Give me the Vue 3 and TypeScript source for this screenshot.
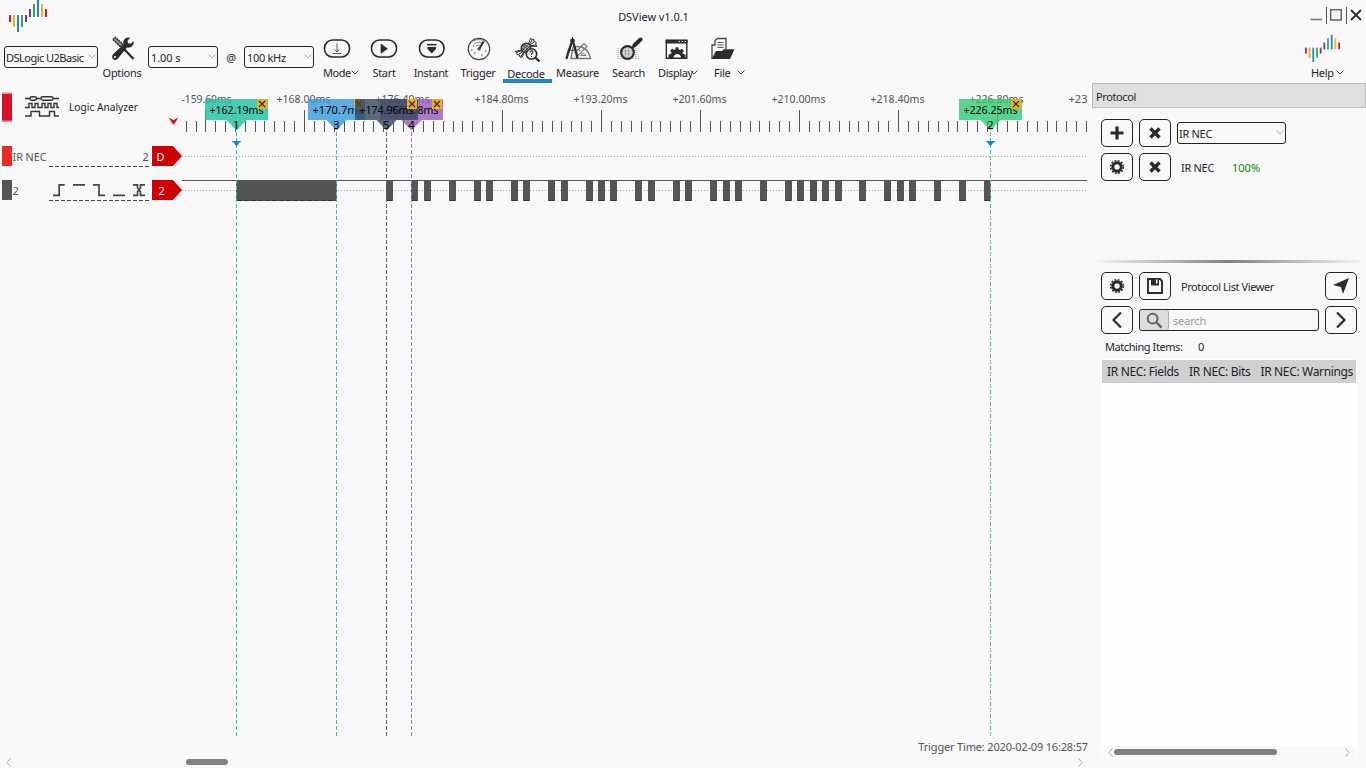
<script setup lang="ts">
interface Bar { x: number; y: number; h: number; c: string }
interface Cursor { id: number; x: number; left: number; width: number; color: string; line: string; label: string; textX: number; textW: number }

const logo: Bar[] = [
  { x: 9, y: 15, h: 7, c: '#d9142a' }, { x: 13, y: 15, h: 12, c: '#efb31b' },
  { x: 17, y: 15, h: 17, c: '#1d86cf' }, { x: 21, y: 15, h: 12, c: '#36a94c' },
  { x: 25, y: 15, h: 7, c: '#7237a0' }, { x: 29, y: 9, h: 8, c: '#7237a0' },
  { x: 33, y: 4, h: 13, c: '#36a94c' }, { x: 37, y: 0, h: 17, c: '#1d86cf' },
  { x: 41, y: 4, h: 13, c: '#efb31b' }, { x: 45, y: 9, h: 8, c: '#d9142a' },
]

const ticks = Array.from({ length: 92 }, (_, i) => {
  const k = i - 2
  return { x: (k < 0 ? Math.ceil(205.5 + k * 9.9) : Math.floor(205.505 + k * 9.9)), major: k % 10 === 0 }
}).filter(t => t.x < 1087)

const times = ['-159.60ms', '+168.00ms', '+176.40ms', '+184.80ms', '+193.20ms', '+201.60ms', '+210.00ms', '+218.40ms', '+226.80ms']
  .map((text, i) => ({ text, x: i === 0 ? 181.5 : 177.5 + i * 99, w: i === 0 ? 50 : 54 }))

const pulses = [386, 411, 424, 449, 474, 486, 511, 523, 548, 561, 586, 598, 610, 635, 648, 673, 685, 710, 723, 735, 760,
  785, 797, 810, 822, 835, 859, 884, 897, 909, 934, 959, 984]

const cursors: Cursor[] = [
  { id: 1, x: 236, left: 205, width: 63, color: '#1abf9f', line: '#2cc3a5', label: '+162.19ms', textX: 209.5, textW: 54 },
  { id: 2, x: 990, left: 959, width: 63, color: '#2ecc71', line: '#45cf80', label: '+226.25ms', textX: 963.5, textW: 54 },
  { id: 3, x: 336, left: 308, width: 57, color: '#3498db', line: '#55a9df', label: '+170.7ms', textX: 312.5, textW: 50.5 },
  { id: 4, x: 411, left: 380, width: 63, color: '#9b59b6', line: '#a76ebf', label: '+177.08ms', textX: 384.5, textW: 54 },
  { id: 5, x: 386, left: 355, width: 63, color: '#34495e', line: '#53637a', label: '+174.96ms', textX: 359.5, textW: 54 },
]
const headers = ['IR NEC: Fields', 'IR NEC: Bits', 'IR NEC: Warnings']
</script>

<template>
  <div class="app">
    <header class="titlebar">
      <svg class="brand" viewBox="0 0 60 34" width="60" height="34" shape-rendering="crispEdges">
        <rect v-for="b in logo" :key="b.x" :x="b.x" :y="b.y" width="2" :height="b.h" :fill="b.c" />
      </svg>
      <span class="title">DSView v1.0.1</span>
      <svg class="winbtns" viewBox="1306 0 60 30" width="60" height="30" fill="none">
        <path d="M1310.500 19.500h11.500" stroke="#777" stroke-width="1.600" />
        <path d="M1326.500 7v17M1346.500 7v17" stroke="#555" />
        <rect x="1330.700" y="9.700" width="10.500" height="10.300" stroke="#666" stroke-width="1.500" />
        <path d="M1351 10l10 10M1361 10l-10 10" stroke="#2b2b2b" stroke-width="1.800" />
      </svg>
    </header>

    <nav class="toolbar">
      <div class="combo device"><span>DSLogic U2Basic</span><svg class="chev pale" viewBox="0 0 8 5"><path d="M.5 .5 4 4 7.500 .5" /></svg></div>
      <div class="tool options">
        <svg class="ico" viewBox="0 0 28 28">
          <path d="M4.800 5.500l2.700-2.300 7.500 7-2.600 2.800z" fill="#888" stroke="#222" stroke-width="1.200" stroke-dasharray="2 .6" />
          <path d="M16 15l9.500 10" stroke="#2b2b2b" stroke-width="2.200" />
          <path d="M5.500 19.800 15.500 10.500c-.8-3.700.8-6.500 4.700-7l2 .2-2.700 3 .5 2.600 2.600.5 3-2.700c.8 4.500-2.500 7.200-6.500 6.500L9.500 25c-1.600 1.300-3.500 1.200-4.600 0-1.100-1.300-1-3.500.6-5.200z" fill="#2b2b2b" />
          <circle cx="7" cy="23" r="1.100" fill="#f8f8f8" />
        </svg>
        <div class="label">Options</div>
      </div>
      <div class="combo duration"><span>1.00 s</span><svg class="chev pale" viewBox="0 0 8 5"><path d="M.5 .5 4 4 7.500 .5" /></svg></div>
      <span class="at">@</span>
      <div class="combo rate"><span>100 kHz</span><svg class="chev pale" viewBox="0 0 8 5"><path d="M.5 .5 4 4 7.500 .5" /></svg></div>
      <div class="tool mode">
        <svg class="ico" viewBox="0 0 28 28"><rect x="1.500" y="6" width="25" height="17" rx="8" fill="none" stroke="#2b2b2b" stroke-width="1.600" /><path d="M14 9.500v8.500M11.500 15.500l2.500 2.500 2.500-2.500M9.500 19.500h9" fill="none" stroke="#555" stroke-width="1" /></svg>
        <div class="label left"><span>Mode</span><svg class="chev" viewBox="0 0 8 5"><path d="M.5 .5 4 4 7.500 .5" /></svg></div>
      </div>
      <div class="tool start">
        <svg class="ico" viewBox="0 0 28 28"><rect x="1.500" y="6" width="25" height="17" rx="8" fill="none" stroke="#2b2b2b" stroke-width="1.600" /><path d="M11 10l6.500 4.800-6.500 4.500z" fill="#2b2b2b" stroke="#2b2b2b" stroke-width=".6" /></svg>
        <div class="label">Start</div>
      </div>
      <div class="tool instant">
        <svg class="ico" viewBox="0 0 28 28"><rect x="2.500" y="6" width="24.500" height="17" rx="8" fill="none" stroke="#2b2b2b" stroke-width="1.600" /><path d="M10 10.700h9.500" stroke="#2b2b2b" stroke-width="1.600" /><path d="M10.500 13h8.500v2l-4.200 4.500L10.500 15z" fill="#2b2b2b" /></svg>
        <div class="label">Instant</div>
      </div>
      <div class="tool trigger">
        <svg class="ico" viewBox="0 0 28 28" fill="none" stroke="#444">
          <circle cx="15" cy="15" r="10.700" stroke-width="1.200" /><path d="M8.500 7.500q6.500-4 13 0M10 9.500q5-3 10 0M12 12q3-2 6 0" stroke="#888" stroke-width="1" /><path d="M15 15l4.500-7.500" stroke="#2b2b2b" stroke-width="1.800" />
          <path d="M14 14h2v2h-2zM7 16h1.500M10 19h1.500M17 21h1.500M21 17h1.500M9 12h1" stroke-width="1" />
        </svg>
        <div class="label">Trigger</div>
      </div>
      <div class="tool decode active">
        <svg class="ico" viewBox="0 0 28 28" fill="none" stroke="#2b2b2b">
          <path d="M8 16 1 17.500l2 1 0 2 2.500.5.5 2 2 .3 2-4.500M3 18l6-1.500M4.500 20.500l5-3.500M7 22.500l3-5" stroke-width="1" />
          <circle cx="12" cy="14" r="4.800" fill="#bbb" stroke-width="1.300" />
          <path d="M8.500 11.500l7 5M10 10l6 4.500M8 14l5 4.500M14.500 10l-6 6M16 12l-6 6M12 9.500l-4 4" stroke-width=".8" />
          <path d="M14.500 10 16.500 4.500l1.700 1L19.500 5l.7 2.500 2 .8-.4 2.400 1.200 1.500-7 .3M15.500 10.500l3-5M16 11l4.500-3.500M16.500 11.800l5.500-.8" stroke-width="1" />
          <circle cx="17.500" cy="20" r="5.200" fill="#f8f8f8" stroke-width="1.600" /><path d="M21.500 23.800l4 3.700" stroke-width="2.200" /><path d="M16 18.500q0-1.700 1.500-1.700 2.200.3 1.200 1.900L17.500 20v1M17.500 22v1" stroke-width="1.100" />
        </svg>
        <div class="label">Decode</div>
      </div>
      <div class="tool measure">
        <svg class="ico" viewBox="0 0 28 28" fill="none">
          <path d="M7 24.500 9 13c10-2 16 3 17.500 11.500z" stroke="#777" stroke-width="1.400" /><path d="M17 21.500q2-4.500 5 0z" stroke="#777" />
          <path d="M10.500 19 20 9.500l3 3-10 10M14 15l2 2M17 12l2 2" stroke="#777" stroke-width="1.100" />
          <path d="M7.500 9 4 19l-1.500 6M9.500 9l2.800 10 1 5" stroke="#2b2b2b" stroke-width="2.300" /><circle cx="8.500" cy="7" r="2.400" fill="#2b2b2b" /><path d="M8.500 3v4M5 15.500q3.500 2 7 0" stroke="#2b2b2b" />
        </svg>
        <div class="label">Measure</div>
      </div>
      <div class="tool search">
        <svg class="ico" viewBox="0 0 28 28" fill="none">
          <path d="M2 14.500h22M2 16.500h22M2 18.500h22M2 20.500h22M2 22.500h22M2 24.500h22" stroke="#c4c4c4" stroke-dasharray="2 1" /><circle cx="12.500" cy="18.500" r="6.300" fill="#ddd" stroke="#2b2b2b" stroke-width="2.200" />
          <path d="M8.500 17h8M8.500 20h8M10.500 14.500v8M13.500 14v9" stroke="#999" stroke-width=".8" /><path d="M17 14l3-3" stroke="#2b2b2b" stroke-width="2.200" /><path d="M19.500 11.300l6-5.800" stroke="#2b2b2b" stroke-width="4" stroke-linecap="round" />
        </svg>
        <div class="label">Search</div>
      </div>
      <div class="tool display">
        <svg class="ico" viewBox="0 0 28 28"><path d="M3.300 6.500h20.500v17.700H3.300z" fill="none" stroke="#2b2b2b" stroke-width="1.400" /><path d="M2.600 5.600h21.900V9.500H2.600z" fill="#2b2b2b" /><path d="M15.500 7h1.500v1h-1.500zM18.500 7H20v1h-1.500zM21.500 7H23v1h-1.500z" fill="#f8f8f8" />
          <path d="M5.500 24v-3.500l2.500-.5.600-1.200-1.500-2 2-2 2 1.300 1.200-.5.500-2.300h2.400l.5 2.300 1.200.5 2-1.300 2 2-1.400 2 .5 1.200 2.500.5V24h-4.500c0-5.500-7.500-5.500-7.500 0z" fill="#2b2b2b" /></svg>
        <div class="label left"><span>Display</span><svg class="chev" viewBox="0 0 8 5"><path d="M.5 .5 4 4 7.500 .5" /></svg></div>
      </div>
      <div class="tool file">
        <svg class="ico" viewBox="0 0 28 28"><path d="M4 25V11h3V6.500L9.500 4.500H18V15" fill="#f8f8f8" stroke="#444" stroke-width="1.300" /><path d="M9.500 8.500h6M9.500 11h6M9.500 13.500h6" stroke="#555" /><path d="M8 17h6l2-1.700h10.500L22 25H3.500z" fill="#2b2b2b" /></svg>
        <div class="label left"><span>File</span><svg class="chev" viewBox="0 0 8 5"><path d="M.5 .5 4 4 7.500 .5" /></svg></div>
      </div>
      <div class="tool help">
        <svg class="mini" viewBox="9 0 39 32" preserveAspectRatio="none"><rect v-for="b in logo" :key="b.x" :x="b.x" :y="b.y" width="1.900" :height="b.h" :fill="b.c" /></svg>
        <div class="label left"><span>Help</span><svg class="chev" viewBox="0 0 8 5"><path d="M.5 .5 4 4 7.500 .5" /></svg></div>
      </div>
    </nav>

    <main class="body">
      <section class="scope">
        <div class="traces">
          <svg class="names" viewBox="0 83 182 655" width="182" height="655">
            <rect x="2" y="92.500" width="10" height="29.500" fill="#ea8c96" /><rect x="2" y="94" width="10" height="26.500" fill="#d6102a" />
            <g fill="none" stroke="#333" stroke-width="1.400">
              <path d="M25 98.500h5M36 98.500h5M53 98.500h6" /><rect x="30" y="96.800" width="6.500" height="3.500" rx="1.700" /><rect x="41" y="96.800" width="12" height="3.500" rx="1.700" />
              <path d="M25 107.500h4v-4h3v4h3v-4h3v4h4v-4h3v4h3v-4h3v4h3v-4h3v4h2" /><path d="M25 116h6v-4.500h8.500v4.500h10v-4.500h5v4.500h4.500" />
            </g>
            <text x="69" y="111" class="ink" textLength="69" lengthAdjust="spacingAndGlyphs">Logic Analyzer</text>
            <path d="M168.500 117.500l5 2.500 5-2.500-5 7.500z" fill="#d6102a" />
            <rect x="2" y="146" width="10" height="20" fill="#ef2929" /><rect x="2" y="180" width="10" height="20" fill="#555" />
            <text x="12.500" y="161" textLength="34" lengthAdjust="spacingAndGlyphs">IR NEC</text><text x="142.500" y="161">2</text><text x="12.500" y="195">2</text>
            <path d="M49 166.500h100M49 200.500h100" stroke="#444" stroke-dasharray="4 2" />
            <path d="M53 195.300h6.200v-10.500h5.500M73 184.800h12M93 184.800h6v10.500h6M113 195.300h12M133 184.800h4.500v3l3 4v3.500h4.500M133 195.300h4.500v-3.500l3-4v-3h4.500" fill="none" stroke="#444" stroke-width="1.700" />
            <path d="M152 146h21l9 10-9 10h-21zM152 180h21l9 10-9 10h-21z" fill="#c00" />
            <text x="156.500" y="161" class="white">D</text><text x="158.500" y="195" class="white">2</text>
          </svg>
          <svg class="waves" viewBox="182 83 905 655" width="905" height="655">
            <text v-for="t in times" :key="t.text" :x="t.x" y="103" :textLength="t.w" lengthAdjust="spacingAndGlyphs">{{ t.text }}</text>
            <text x="1068.500" y="103" textLength="19" lengthAdjust="spacingAndGlyphs">+23</text>
            <g shape-rendering="crispEdges">
              <rect v-for="t in ticks" :key="t.x" :x="t.x" :y="t.major ? 110 : 121" width="1" :height="t.major ? 22 : 11" fill="#555" />
              <path d="M182 156.500h905M182 190.500h905" stroke="#a2a2a2" stroke-dasharray="1 2" />
              <rect x="182" y="180" width="905" height="1" fill="#555" />
              <rect x="236" y="180" width="101" height="21" fill="#555" /><path d="M237 200.500h99" stroke="#333" stroke-dasharray="5 2" />
              <template v-for="p in pulses" :key="p"><rect :x="p" y="180" width="7" height="21" fill="#555" /><rect :x="p + 1" y="200" width="5" height="1" fill="#333" /></template>
            </g>
            <g v-for="c in cursors" :key="c.id">
              <path :d="`M${c.x + 0.5} 132V736`" :stroke="c.line" stroke-dasharray="4 2" />
              <g :fill="c.color" fill-opacity=".8"><rect :x="c.left" y="99" :width="c.width" height="21" /><path :d="`M${c.x - 9.500} 120h20l-10 10.500z`" /></g>
              <text class="black" :x="c.textX" y="114" :textLength="c.textW" lengthAdjust="spacingAndGlyphs">{{ c.label }}</text>
              <text class="black" :x="c.x + 0.500" y="129" text-anchor="middle">{{ c.id }}</text>
              <rect :x="c.left + c.width - 11" y="99" width="10" height="10" fill="#f1b012" />
              <path :d="`M${c.left + c.width - 9} 101l6 6m0-6l-6 6`" stroke="#222" stroke-width="1.100" />
              <path v-if="c.id < 3" :d="`M${c.x - 4.500} 141h10l-2.500 2-2.500 3.500-2.500-3.500z`" fill="#1886cc" />
            </g>
          </svg>
        </div>
        <div class="status"><span>Trigger Time: 2020-02-09 16:28:57</span></div>
        <div class="scroll">
          <svg viewBox="0 0 5 9"><path d="M4.500 .5.800 4.500l3.700 4" /></svg><i class="thumb" /><svg class="end" viewBox="0 0 5 9"><path d="M.5 .5l3.700 4-3.700 4" /></svg>
        </div>
      </section>

      <aside class="panel">
        <h2>Protocol</h2>
        <div class="row add">
          <button><svg viewBox="0 0 16 16"><path d="M8 1.500v13M1.500 8h13" stroke-width="3.200" /></svg></button>
          <button><svg viewBox="0 0 16 16"><path d="M3.500 3.500l9 9M12.500 3.500l-9 9" stroke-width="3.400" /></svg></button>
          <div class="combo proto"><span>IR NEC</span><svg class="chev pale" viewBox="0 0 8 5"><path d="M.5 .5 4 4 7.500 .5" /></svg></div>
        </div>
        <div class="row">
          <button><svg viewBox="0 0 16 16"><circle cx="8" cy="8" r="4.200" stroke-width="3" /><circle cx="8" cy="8" r="6.300" stroke-width="1.700" stroke-dasharray="1.800 1.500" /></svg></button>
          <button><svg viewBox="0 0 16 16"><path d="M3.500 3.500l9 9M12.500 3.500l-9 9" stroke-width="3.400" /></svg></button>
          <span class="name">IR NEC</span><span class="pct">100%</span>
        </div>
        <div class="splitter" />
        <div class="row">
          <button><svg viewBox="0 0 16 16"><circle cx="8" cy="8" r="4.200" stroke-width="3" /><circle cx="8" cy="8" r="6.300" stroke-width="1.700" stroke-dasharray="1.800 1.500" /></svg></button>
          <button><svg viewBox="0 0 16 16"><path d="M1 1h12l2 2v12H1z" stroke-width="1.900" /><path d="M4 1h8v6.500H4z" fill="#2b2b2b" stroke="none" /><path d="M9 1.500h1.500v4H9z" fill="#f8f8f8" stroke="none" /></svg></button>
          <span class="name viewer">Protocol List Viewer</span>
          <button class="last"><svg viewBox="0 0 16 16"><path d="M16 0 10 16 8 9 0 7z" fill="#2b2b2b" stroke="none" /></svg></button>
        </div>
        <div class="row">
          <button><svg viewBox="0 0 16 16"><path d="M12 .5 4.500 8l7.500 7.500" stroke-width="2.200" /></svg></button>
          <div class="searchbox"><span class="lens"><svg viewBox="0 0 18 18"><circle cx="7" cy="7" r="5.200" stroke="#666" stroke-width="2.200" fill="none" /><path d="M11 11l5.500 5.500" stroke="#666" stroke-width="2.500" /></svg></span><span class="ph">search</span></div>
          <button class="last"><svg viewBox="0 0 16 16"><path d="M4 .5 11.500 8 4 15.500" stroke-width="2.200" /></svg></button>
        </div>
        <div class="matching"><span>Matching Items:</span><span>0</span></div>
        <div class="table">
          <div class="thead"><span v-for="h in headers" :key="h">{{ h }}</span></div>
          <div class="scroll inner">
            <svg viewBox="0 0 5 9"><path d="M4.500 .5.800 4.500l3.700 4" /></svg><i class="thumb" /><svg class="end" viewBox="0 0 5 9"><path d="M.5 .5l3.700 4-3.700 4" /></svg>
          </div>
        </div>
      </aside>
    </main>
  </div>
</template>

<style>
body { background: #f8f8f8; overflow: hidden; }
</style>
<style scoped>
* { box-sizing: border-box; }
.app { width: 1366px; height: 768px; display: flex; flex-direction: column; background: #f8f8f8; color: #1f1f2b; font: 11px/14px "Noto Sans", "Open Sans", sans-serif; letter-spacing: -0.3px; white-space: nowrap; overflow: hidden; }
svg { display: block; flex: none; }
.titlebar { height: 34px; display: grid; grid-template-columns: 60px 1fr 60px; }
.title { text-align: center; padding-top: 10px; padding-right: 59px; letter-spacing: -0.05px; }
.toolbar { height: 49px; display: flex; padding-left: 4px; }
.combo { height: 22px; border: 1px solid #222; border-radius: 3px; display: flex; align-items: center; justify-content: space-between; padding: 2px 1px 0 2px; margin-top: 12px; flex: none; }
.chev { width: 8px; height: 5px; fill: none; stroke: #444; stroke-width: 1; }
.chev.pale { stroke: #aaa; margin-bottom: 3px; }
.device { width: 94px; padding-left: 1px; letter-spacing: -0.52px; }
.duration, .rate { width: 70px; }
.duration { padding-left: 2px; letter-spacing: -0.1px; }
.at { width: 26px; text-align: center; padding-top: 17px; }
.tool { flex: none; height: 49px; width: 48px; display: flex; flex-direction: column; align-items: center; }
.ico { width: 28px; height: 28px; fill: none; }
.options { margin-right: 2px; }
.label { height: 14px; margin-top: 4px; }
.left { align-self: flex-start; display: flex; align-items: center; }
.left .chev { margin-left: 2px; margin-bottom: 2px; }
.mode, .instant { width: 46px; }
.mode .left { padding-left: 9px; }
.mode .left span { width: 26px; letter-spacing: -0.45px; }
.decode { width: 49px; margin-left: 1px; border-bottom: 4px solid #1c86cb; }
.decode .label { margin-top: 5px; padding-right: 3px; }
.measure, .search { width: 51px; }
.display { width: 45px; }
.display .left { padding-left: 4px; }
.display .left span { width: 30px; letter-spacing: -0.4px; }
.file { width: 46px; }
.file .left { padding-left: 15px; }
.file .left span { width: 21px; }
.help { margin-left: auto; width: 61px; align-items: flex-start; }
.mini { width: 36px; height: 27px; margin: 1px 0 0; }
.help .left { padding-left: 6px; }
.body { flex: 1; display: flex; }
.scope { width: 1092px; }
.traces { display: flex; height: 655px; }
.traces text { font: 11px "Noto Sans", sans-serif; fill: #555; letter-spacing: 0; }
.traces .ink { fill: #1f1f2b; }
.traces .white { fill: #fff; }
.traces .black { fill: #000; }
.status { height: 18px; text-align: right; padding: 2px 4px 0 0; color: #555; letter-spacing: -0.17px; }
.scroll { height: 12px; display: flex; align-items: center; padding: 0 9px 0 6px; }
.scroll svg { width: 5px; height: 9px; fill: none; stroke: #aaa; }
.thumb { width: 42px; height: 6px; border-radius: 3px; background: #808080; margin-left: 175px; }
.end { margin-left: auto; }
.panel { width: 274px; }
h2 { margin: 0; height: 25px; font: inherit; background: #dfdfdf; border: 1px solid #bbb; padding: 6px 0 0 3px; letter-spacing: -0.4px; }
.row { display: flex; align-items: center; gap: 6px; height: 28px; margin: 6px 9px 0; }
.row.add { margin-top: 11px; }
button { width: 32px; height: 28px; border: 1px solid #222; border-radius: 5px; background: transparent; padding: 0; display: flex; align-items: center; justify-content: center; flex: none; }
button svg { width: 16px; height: 16px; fill: none; stroke: #2b2b2b; }
.proto { width: 109px; margin-top: 0; padding-left: 1px; }
.name { margin-left: 4px; width: 45px; padding-top: 2px; }
.viewer { width: 110px; letter-spacing: -0.43px; }
.pct { color: #078a07; padding-top: 2px; letter-spacing: 0; }
.last { margin-left: auto; }
.splitter { height: 3px; margin-top: 79px; background: linear-gradient(90deg, #f8f8f8, #808080 50%, #f8f8f8); }
.splitter + .row { margin-top: 9px; }
.searchbox { width: 180px; height: 22px; border: 1px solid #222; border-radius: 3px; display: flex; align-items: center; color: #999; }
.lens { width: 29px; height: 20px; background: #dcdddf; border-right: 1px solid #aaa; border-radius: 3px; display: flex; align-items: center; justify-content: center; }
.lens svg { width: 17px; height: 17px; }
.ph { margin-left: 4px; padding-top: 2px; letter-spacing: -0.15px; }
.matching { display: flex; margin: 6px 0 0 13px; height: 14px; letter-spacing: -0.43px; }
.matching span:first-child { width: 93px; }
.table { margin: 5px 9px 0; height: 400px; background: #fefefe; display: flex; flex-direction: column; padding: 1px; }
.thead { height: 23px; background: #d0d0d0; display: flex; align-items: center; justify-content: space-between; padding: 0 3px 0 5px; font-size: 12px; letter-spacing: -0.34px; }
.inner { margin-top: auto; background: #f8f8f8; padding: 0 6px; }
.inner .thumb { width: 163px; margin-left: 1px; }
</style>
